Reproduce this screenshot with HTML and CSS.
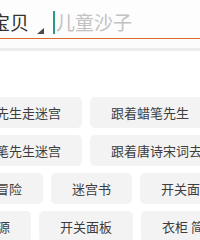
FILE: index.html
```html
<!DOCTYPE html>
<html lang="zh">
<head>
<meta charset="utf-8">
<link rel="stylesheet" href="styles.css">
</head>
<body>
<div class="page">
  <div class="search">
    <span class="scope">宝贝</span>
    <svg class="caret" width="7" height="6" viewBox="0 0 7 6"><polygon points="7,0 7,6 0,6" fill="#4a4a4a"/></svg>
    <span class="cursor"></span>
    <span class="placeholder">儿童沙子</span>
  </div>
  <div class="under"></div>
  <div class="tags">
    <div class="row r1">
      <span class="tag">跟着蜡笔先生走迷宫</span>
      <span class="tag">跟着蜡笔先生</span>
    </div>
    <div class="row r2">
      <span class="tag">跟着蜡笔先生迷宫</span>
      <span class="tag">跟着唐诗宋词去旅行</span>
    </div>
    <div class="row r3">
      <span class="tag">小熊冒险</span>
      <span class="tag">迷宫书</span>
      <span class="tag">开关面板</span>
    </div>
    <div class="row r4">
      <span class="tag">电源</span>
      <span class="tag">开关面板</span>
      <span class="tag">衣柜 简约</span>
    </div>
  </div>
</div>
</body>
</html>
```
FILE: styles.css
```css
html, body {
  margin: 0;
  padding: 0;
  background: #ffffff;
}
.page {
  width: 200px;
  height: 240px;
  overflow: hidden;
  font-family: "Noto Sans CJK SC", "Noto Sans", sans-serif;
}
.search {
  height: 38px;
  display: flex;
  align-items: flex-start;
  border-bottom: 1px solid #dc6a28;
  background: #fdfdfd;
}
.scope {
  margin-left: -9px;
  margin-top: 12px;
  font-size: 19px;
  line-height: 19px;
  color: #333333;
}
.caret {
  margin-left: 8px;
  margin-top: 28px;
}
.cursor {
  margin-left: 9px;
  margin-top: 11px;
  width: 2px;
  height: 23px;
  background: #2a9a8a;
}
.placeholder {
  margin-left: 1px;
  margin-top: 12px;
  font-size: 19px;
  line-height: 19px;
  color: #c2c2c2;
}
.under {
  height: 9px;
  border-bottom: 3px solid #ececec;
  background: #fcfcfc;
}
.tags {
  padding-top: 46px;
  display: flex;
  flex-direction: column;
  gap: 7px;
}
.row {
  display: flex;
  gap: 8px;
  height: 31px;
}
.r1 { margin-left: -77px; }
.r2 { margin-left: -64px; }
.r3 { margin-left: -51px; }
.r4 { margin-left: -37px; }
.tag {
  flex-shrink: 0;
  white-space: nowrap;
  background: #f3f3f3;
  border-radius: 5px;
  padding: 0 21px;
  font-size: 13px;
  line-height: 31px;
  color: #3d3d3d;
}
```
